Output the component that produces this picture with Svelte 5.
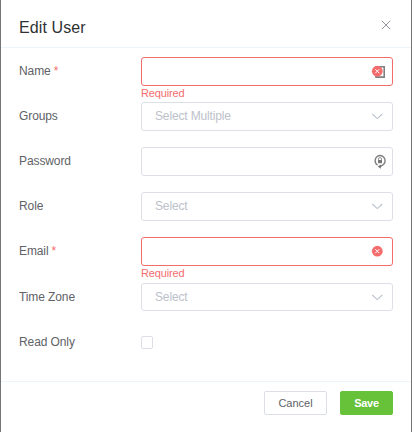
<script>
  const fields = [
    { label: 'Name', required: true, kind: 'text', icon: 'card', error: 'Required' },
    { label: 'Groups', kind: 'select', placeholder: 'Select Multiple' },
    { label: 'Password', kind: 'text', icon: 'lock' },
    { label: 'Role', kind: 'select', placeholder: 'Select' },
    { label: 'Email', required: true, kind: 'text', error: 'Required' },
    { label: 'Time Zone', kind: 'select', placeholder: 'Select', last: true },
    { label: 'Read Only', kind: 'check' }
  ];
</script>

<div class="dialog">
  <header>
    <h1>Edit User</h1>
    <svg class="close" width="10" height="10" viewBox="0 0 10 10"><path d="M.8.8l8.4 8.4M9.2.8L.8 9.2" /></svg>
  </header>

  <main>
    {#each fields as f}
      <div class="row" class:last={f.last}>
        <div class="label">{f.label}{#if f.required}<span class="star">*</span>{/if}</div>
        <div class="control">
          {#if f.kind === 'check'}
            <div class="check"></div>
          {:else}
            <div class="box" class:invalid={f.error}>
              <span class="placeholder">{f.placeholder ?? ''}</span>
              <svg class="icon" width="18" height="17" viewBox="0 0 18 17">
                {#if f.icon === 'card'}
                  <path d="M6 3.7h8.2v10.4H6z" fill="#fff" stroke="#808080" stroke-width="1.6" />
                {/if}
                {#if f.icon === 'lock'}
                  <path d="M7.6 12.2A5 5.2 0 1 1 12.6 12.2L10 13.6" fill="none" stroke="#808080" stroke-width="1.5" />
                  <path d="M10.8 11.4v4.4L7.8 13.6z" fill="#707070" />
                  <path d="M8.5 7.2V6.1a1.5 1.5 0 0 1 3 0V7.2" fill="none" stroke="#858585" stroke-width="0.9" />
                  <path d="M8 7h4v3.2H8z" fill="#777" />
                {/if}
                {#if f.error}
                  <circle cx="7.3" cy="8.2" r="5.4" fill="#f56c6c" />
                  <path d="M5.3 6.2l4 4M9.3 6.2l-4 4" stroke="#fff" stroke-width="1" />
                {/if}
                {#if f.kind === 'select'}
                  <path d="M2.3 6l5 4.6 5-4.6" fill="none" stroke="#bcc2cd" stroke-width="1.1" />
                {/if}
              </svg>
            </div>
            {#if f.error}<div class="error">{f.error}</div>{/if}
          {/if}
        </div>
      </div>
    {/each}
  </main>

  <footer>
    <button class="cancel">Cancel</button>
    <button class="save">Save</button>
  </footer>
</div>

<style>
  :global(body) {
    background: #fff;
  }
  .dialog {
    box-sizing: border-box;
    height: 432px;
    border: solid #757575;
    border-width: 0 1px;
    display: flex;
    flex-direction: column;
    background: #fff;
    font-family: 'Liberation Sans', Arial, sans-serif;
    color: #606266;
  }
  header {
    box-sizing: border-box;
    height: 48px;
    padding: 5px 20px 0 18px;
    display: flex;
    align-items: center;
    justify-content: space-between;
    border-bottom: 1px solid #ecf5fc;
  }
  h1 {
    margin: 4px 0 0;
    font-size: 16px;
    line-height: 20px;
    font-weight: 400;
    letter-spacing: 0.1px;
    color: #303133;
  }
  .close {
    stroke: #909399;
    stroke-width: 1;
    margin-top: -3px;
  }
  main {
    height: 324px;
    padding: 9px 18px 0;
  }
  .row {
    display: flex;
    height: 45px;
  }
  .row:nth-child(5) {
    height: 46px;
  }
  .label {
    width: 122px;
    font-size: 12px;
    line-height: 28px;
    letter-spacing: -0.1px;
  }
  .star {
    color: #f56c6c;
    margin-left: 3px;
  }
  .control {
    width: 252px;
  }
  .box {
    box-sizing: border-box;
    height: 29px;
    border: 1px solid #dcdfe6;
    border-radius: 3px;
    padding: 0 4px 0 13px;
    display: flex;
    align-items: center;
    justify-content: space-between;
  }
  .last .box {
    height: 28px;
  }
  .invalid {
    border-color: #f56c6c;
  }
  .placeholder {
    font-size: 12px;
    line-height: 27px;
    color: #bcc1ca;
    letter-spacing: -0.15px;
  }
  .error {
    font-size: 11px;
    line-height: 12px;
    margin-top: 1px;
    letter-spacing: -0.15px;
    color: #f56c6c;
  }
  .check {
    box-sizing: border-box;
    width: 12px;
    height: 13px;
    margin-top: 8px;
    border: 1px solid #dcdfe6;
    border-radius: 2px;
  }
  footer {
    flex: 1;
    border-top: 1px solid #ecf5fc;
    padding: 9px 18px 0;
    display: flex;
    align-items: flex-start;
    justify-content: flex-end;
    gap: 13px;
  }
  button {
    box-sizing: border-box;
    height: 24px;
    margin: 0;
    padding: 0;
    border: 1px solid #dcdfe6;
    border-radius: 2px;
    background: #fff;
    color: #606266;
    font: 11px/22px 'Liberation Sans', Arial, sans-serif;
  }
  .cancel {
    width: 63px;
  }
  .save {
    width: 53px;
    border-color: #67c23a;
    background: #67c23a;
    color: #fff;
    font-weight: 700;
    letter-spacing: -0.3px;
  }
</style>
